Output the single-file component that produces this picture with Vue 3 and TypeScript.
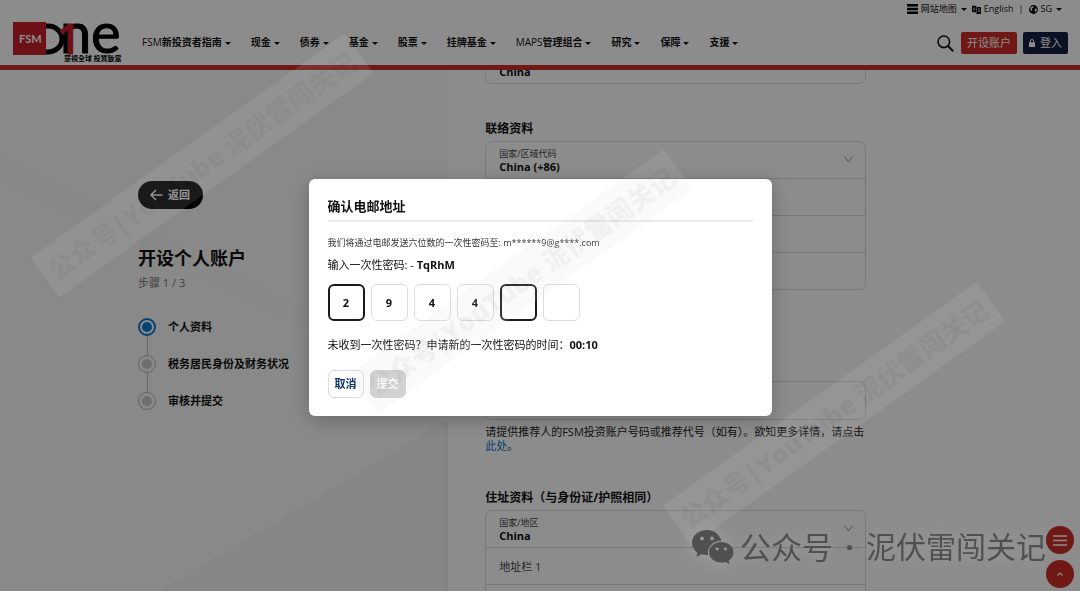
<script setup lang="ts">
import { ref } from 'vue'

interface NavItem { latin: string; text: string }
const nav: NavItem[] = [
  { latin: 'FSM', text: '新投资者指南' },
  { latin: '', text: '现金' },
  { latin: '', text: '债券' },
  { latin: '', text: '基金' },
  { latin: '', text: '股票' },
  { latin: '', text: '挂牌基金' },
  { latin: 'MAPS', text: '管理组合' },
  { latin: '', text: '研究' },
  { latin: '', text: '保障' },
  { latin: '', text: '支援' },
]
const steps = ['个人资料', '税务居民身份及财务状况', '审核并提交']
const currentStep = ref(0)
const otp = ref<string[]>(['2', '9', '4', '4', '', ''])
const activeBoxes = [0, 4]
const contactFields = ['手机号码', '电邮地址', '确认电邮']
const contact = ref<string[]>(['', '', ''])
const referral = ref('')
const address = ref<string[]>(['', ''])
const stamps = ['a', 'b', 'c']
</script>

<template>
  <div class="page">
    <header class="header">
      <a class="logo" href="#" aria-label="FSMOne">
        <svg viewBox="0 0 110 42" width="110" height="42">
          <path d="M33 5H35A14 13 0 0 1 35 31H33" fill="none" stroke="#000" stroke-width="5" />
          <text x="47" y="32" class="logo-ne">n</text>
          <text x="78" y="32" class="logo-ne">e</text>
          <text x="44" y="33" class="logo-one">1</text>
          <rect x="0" y="1" width="33" height="33" fill="#c8202b" />
          <text x="6" y="22" class="logo-fsm">FSM</text>
          <text x="51" y="40" class="logo-tag">慧視全球 投資致富</text>
        </svg>
      </a>
      <nav class="nav">
        <a v-for="n in nav" :key="n.text" href="#"><span class="latin">{{ n.latin }}</span>{{ n.text }}<i class="caret"></i></a>
      </nav>
      <div class="tools">
        <div class="utility">
          <a href="#"><svg width="11" height="10" viewBox="0 0 11 10"><path d="M0 0h11v2.400H0zM0 3.800h11v2.400H0zM0 7.600h11V10H0z" /></svg>网站地图<i class="caret"></i></a>
          <a href="#"><svg width="9" height="9" viewBox="0 0 9 9"><path d="M0 .5 4.500 1v6.500L0 7zM5 2h4v7H4.500L4 8h1z" /><path d="M1.200 5.500 2.200 2.500l1 3M6 4h2M7 3.500v1M6 7l2-2.500M6.200 5 8 7" stroke="#fff" stroke-width=".6" fill="none" /></svg>English</a>
          <span class="bar">|</span>
          <a href="#"><svg width="9" height="9" viewBox="0 0 9 9"><circle cx="4.500" cy="4.500" r="4.400" /><path d="M1.200 2.800 3.200 1.200 4.800 1.600 4 3 2.600 3.800 3.400 5 2.800 6.200 1.600 5zM5.600 4.200 7.400 3.200 8 5 6.600 7.200 5.800 6z" fill="#fff" /></svg>SG<i class="caret"></i></a>
        </div>
        <div class="actions">
          <button class="search" aria-label="搜索">
            <svg width="17" height="17" viewBox="0 0 17 17"><circle cx="6.800" cy="6.800" r="5.800" fill="none" stroke="#111" stroke-width="1.600" /><path d="m11 11 5.200 5.200" stroke="#111" stroke-width="2" /></svg>
          </button>
          <button class="btn open">开设账户</button>
          <button class="btn login"><svg width="6" height="8" viewBox="0 0 6 8"><path d="M0 3.200h6V8H0z" fill="#fff" /><path d="M1.300 3.500V2.200a1.700 1.700 0 0 1 3.400 0v1.300" fill="none" stroke="#fff" /></svg>登入</button>
        </div>
      </div>
    </header>

    <main class="main">
      <aside class="side">
        <svg class="deco" viewBox="0 0 448 521" preserveAspectRatio="none" aria-hidden="true">
          <path d="M0 84 90 130 448 312v14L0 112z" fill="#f7f7f7" />
          <path d="M160 521 443 352v169z" fill="#f4f4f4" />
          <path d="M443 352h5v169h-5z" fill="#f0f0f0" />
        </svg>
        <div class="side-body">
          <button class="back"><svg width="13" height="12" viewBox="0 0 13 12"><path d="M12.500 6H1M6 1 1 6l5 5" fill="none" stroke="#fff" stroke-width="1.500" /></svg>返回</button>
          <h1>开设个人账户</h1>
          <p class="progress">步骤 1 / 3</p>
          <ol class="steps">
            <li v-for="(s, i) in steps" :key="s">
              <label><input v-model="currentStep" type="radio" name="step" :value="i" />{{ s }}</label>
            </li>
          </ol>
        </div>
      </aside>

      <form class="form" @submit.prevent>
        <div class="card first">
          <label class="row pick"><select aria-label="国籍"><option>China</option></select></label>
        </div>

        <h2>联络资料</h2>
        <div class="card">
          <label class="row pick">
            <span>国家/区域代码</span>
            <select><option>China (+86)</option></select>
            <svg class="chev" width="9" height="7" viewBox="0 0 9 7"><path d="m.5.500 4 5.500 4-5.500" /></svg>
          </label>
          <div v-for="(f, i) in contactFields" :key="f" class="row">
            <input v-model="contact[i]" type="text" :aria-label="f" />
          </div>
        </div>

        <div class="card referral">
          <div class="row"><input v-model="referral" type="text" aria-label="推荐人" /></div>
        </div>
        <p class="hint">请提供推荐人的FSM投资账户号码或推荐代号（如有）。欲知更多详情，请点击<a href="#">此处</a>。</p>

        <h2>住址资料（与身份证/护照相同）</h2>
        <div class="card">
          <label class="row pick">
            <span>国家/地区</span>
            <select><option>China</option></select>
            <svg class="chev" width="9" height="7" viewBox="0 0 9 7"><path d="m.5.500 4 5.500 4-5.500" /></svg>
          </label>
          <div class="row"><input v-model="address[0]" type="text" placeholder="地址栏 1" aria-label="地址栏 1" /></div>
          <div class="row"><input v-model="address[1]" type="text" aria-label="地址栏 2" /></div>
        </div>
      </form>
    </main>

    <div class="floating">
      <button aria-label="菜单"><svg width="14" height="11" viewBox="0 0 14 11"><path d="M0 1h14M0 5.500h14M0 10h14" stroke-width="1.400" /></svg></button>
      <button aria-label="返回顶部"><svg width="6" height="4" viewBox="0 0 6 4"><path d="m.5 3.500 2.500-2.500 2.500 2.500" stroke-width="1.200" /></svg></button>
    </div>

    <div class="mask">
      <section class="modal" role="dialog" aria-labelledby="otp-title">
        <h3 id="otp-title">确认电邮地址</h3>
        <p class="sent">我们将通过电邮发送六位数的一次性密码至: m******9@g****.com</p>
        <p class="enter">输入一次性密码: - <b>TqRhM</b></p>
        <div class="otp">
          <input v-for="(d, i) in otp" :key="i" v-model="otp[i]" type="text" maxlength="1" inputmode="numeric" :aria-label="`第 ${i + 1} 位`" :class="{ active: activeBoxes.includes(i) }" />
        </div>
        <p class="resend">未收到一次性密码？<span>申请新的一次性密码的时间：</span><b>00:10</b></p>
        <div class="buttons">
          <button class="cancel">取消</button>
          <button class="submit" disabled>提交</button>
        </div>
      </section>
    </div>

    <div v-for="s in stamps" :key="s" class="stamp" :class="`stamp-${s}`">公众号|YouTube 泥伏雷闯关记</div>

    <div class="account">
      <svg width="42" height="35" viewBox="0 0 42 35">
        <path fill-rule="evenodd" d="M15 0C6.500 0 0 5.600 0 12.800c0 4 2.100 7.500 5.500 9.900L4.300 27l5-2.700c1.800.500 3.700.8 5.700.8h1.200C14.500 17.500 20.500 11 29.300 10.800 28 4.600 22 0 15 0zM10 6.600a1.900 1.900 0 1 1 0 3.800 1.900 1.900 0 0 1 0-3.800zM20 6.600a1.900 1.900 0 1 1 0 3.800 1.900 1.900 0 0 1 0-3.800z" />
        <path fill-rule="evenodd" d="M29.300 12C22.500 12 17 16.500 17 22.200s5.500 10.300 12.300 10.300c1.500 0 3-.2 4.300-.6l4 2.300-1-3.500c3-1.900 4.900-5 4.900-8.500C41.500 16.500 36 12 29.300 12zM25.200 17.200a1.600 1.600 0 1 1 0 3.200 1.600 1.600 0 0 1 0-3.200zM33.400 17.200a1.600 1.600 0 1 1 0 3.200 1.600 1.600 0 0 1 0-3.200z" />
      </svg>
      <span class="kind">公众号</span><span class="dot">·</span><span>泥伏雷闯关记</span>
    </div>
  </div>
</template>

<style>
body { margin: 0; overflow: hidden; }
</style>

<style scoped>
* { box-sizing: border-box; }
.page {
  position: relative;
  display: flex;
  flex-direction: column;
  height: 100vh;
  overflow: hidden;
  background: #fff;
  color: #111;
  font: 11px/14px "Open Sans", "Noto Sans CJK SC", sans-serif;
}
button, input, select { font: inherit; color: inherit; margin: 0; padding: 0; border: 0; background: none; }
a { color: inherit; text-decoration: none; }
p, h1, h2, h3, ol { margin: 0; padding: 0; }

.header { display: flex; align-items: flex-start; padding: 0 12px 0 13px; height: 70px; flex: none; border-bottom: 5px solid #ca2c28; background: #fff; }
.logo { padding-top: 21px; line-height: 0; }
.logo svg { overflow: visible; }
.logo-ne { font: 400 56px Lato, sans-serif; stroke: #000; stroke-width: 1px; }
.logo-one { font: 600 41px "Open Sans", sans-serif; fill: #c8202b; stroke: #c8202b; stroke-width: 1px; }
.logo-fsm { font: 700 11px Lato, sans-serif; fill: #fff; }
.logo-tag { font: 700 7px "Noto Sans CJK TC", sans-serif; }
.nav { display: flex; gap: 20px; padding: 35px 0 0 19px; font-size: 10px; font-weight: 700; white-space: nowrap; }
.latin { font-weight: 500; }
.caret { display: inline-block; margin-left: 3px; border: 3px solid transparent; border-top-color: currentColor; border-bottom: 0; vertical-align: 2px; }
.nav .caret { vertical-align: 1px; }
.tools { margin-left: auto; display: flex; flex-direction: column; align-items: flex-end; gap: 16px; padding-top: 2px; }
.utility { display: flex; gap: 5px; padding-right: 6px; font-size: 9px; }
.utility a { display: flex; align-items: center; gap: 3px; }
.utility .caret { margin-left: 1px; }
.actions { display: flex; align-items: center; gap: 6px; }
.search { line-height: 0; margin-right: 1px; }
.btn { height: 22px; padding: 0 6px; border-radius: 2px; color: #fff; }
.open { background: #ca2c28; }
.login { background: #15203f; display: flex; align-items: center; gap: 5px; }

.main { display: flex; flex: 1; min-height: 0; overflow: hidden; }
.side { position: relative; width: 41.5%; background: #fafafa; }
.deco { position: absolute; inset: 0; width: 100%; height: 100%; }
.side-body { position: relative; padding: 111px 0 0 138px; }
.back { display: flex; align-items: center; gap: 5px; height: 28px; padding: 0 13px 0 12px; border-radius: 14px; background: #000; color: #fff; font-weight: 700; }
h1 { margin-top: 36px; font-size: 18px; line-height: 26px; font-weight: 700; }
.progress { margin-top: 5px; color: #777; }
.steps { list-style: none; margin-top: 28px; }
.steps li { position: relative; height: 37px; }
.steps li + li::before { content: ""; position: absolute; left: 9px; top: -19px; height: 19px; width: 1px; background: #bbb; }
.steps label { display: flex; align-items: center; gap: 12px; height: 18px; font-weight: 700; }
.steps input { appearance: none; width: 18px; height: 18px; border-radius: 50%; border: 1px solid #b4b4b4; background: #c8c8c8; background-clip: content-box; padding: 3px; }
.steps input:checked { border: 2px solid #0878d4; background-color: #0878d4; padding: 2px; }

.form { width: 381px; margin: -24px 0 0 37px; }
.card { border: 1px solid #dadada; border-radius: 7px; }
.row { position: relative; display: flex; flex-direction: column; justify-content: center; height: 37px; padding: 0 13px; }
.pick { height: 36px; }
.row + .row { border-top: 1px solid #dadada; }
.row input { height: 30px; outline: 0; }
.row input::placeholder { color: #444; opacity: 1; }
.row span { font-size: 9px; line-height: 13px; color: #444; }
.row select { appearance: none; height: 14px; line-height: 14px; font-weight: 700; opacity: 1; }
.first .row { padding-top: 14px; }
.chev { position: absolute; right: 12px; top: 14px; fill: none; stroke: #999; }
h2 { margin-top: 36px; font-size: 12px; line-height: 18px; font-weight: 700; }
h2 + .card { margin-top: 3px; }
.referral { margin-top: 91px; }
.hint { margin: 5px -4px 0 0; color: #222; }
.hint a { color: #0878d4; }
.hint + h2 { margin-top: 36px; }

.floating { position: fixed; right: 6px; bottom: 3px; display: grid; gap: 6px; }
.floating button { display: grid; place-items: center; width: 28px; height: 28px; border-radius: 50%; background: #ca2c28; }
.floating svg { fill: none; stroke: #fff; }

.mask { position: fixed; inset: 0; display: flex; align-items: center; justify-content: center; padding-top: 4px; background: rgba(0, 0, 0, .45); }
.modal { width: 463px; padding: 18px 19px; border-radius: 6px; background: #fff; box-shadow: 0 4px 20px rgba(0, 0, 0, .25); }
h3 { padding-bottom: 4px; border-bottom: 2px solid #ebebeb; font-size: 13px; line-height: 19px; }
.sent { margin-top: 14px; font-size: 9px; color: #333; }
.enter { margin-top: 8px; }
.otp { display: flex; gap: 6px; margin-top: 12px; }
.otp input { width: 37px; height: 37px; border: 1px solid #dcdcdc; border-radius: 6px; text-align: center; font-weight: 700; outline: 0; }
.otp .active { border: 2px solid #1a1a1a; }
.resend { margin-top: 17px; }
.buttons { display: flex; gap: 6px; margin-top: 18px; }
.buttons button { height: 28px; padding: 0 6px; border: 1px solid #dcdcdc; border-radius: 6px; font-weight: 700; }
.cancel { color: #0a3266; }
.buttons .submit { background: #d2d2d2; border-color: #d2d2d2; color: #fff; }

.stamp { position: absolute; display: grid; place-items: center; width: 386px; height: 49px; margin: -24px 0 0 -193px; transform: rotate(-35.5deg); background: rgba(213, 213, 213, .12); color: rgba(0, 0, 0, .04); font-size: 26px; font-weight: 800; white-space: nowrap; pointer-events: none; }
.stamp-a { left: 202px; top: 165px; }
.stamp-b { left: 521px; top: 281px; }
.stamp-c { left: 834px; top: 413px; }

.account { position: absolute; right: 34px; bottom: 24px; display: flex; align-items: center; color: #505050; font-size: 30px; line-height: 40px; white-space: nowrap; pointer-events: none; text-shadow: 0 0 16px rgba(255, 255, 255, .2); }
.account svg { fill: #505050; margin-right: 6px; filter: drop-shadow(0 0 10px rgba(255, 255, 255, .2)); }
.kind { font-size: 31px; }
.dot { width: 33px; text-align: center; font-weight: 700; }
</style>
